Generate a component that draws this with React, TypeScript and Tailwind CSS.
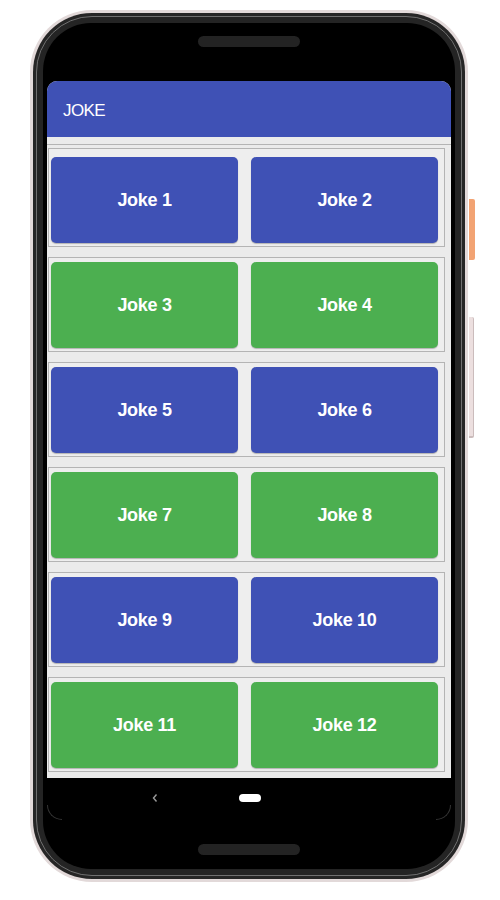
const jokes = Array.from({ length: 12 }, (_, i) => `Joke ${i + 1}`)

function JokeButton({ label, color }: { label: string; color: string }) {
  return (
    <div
      className={`${color} h-[86px] rounded-[5px] shadow-[0_1px_1px_rgba(0,0,0,0.25)] flex items-center justify-center text-white text-[18px] font-bold tracking-[-0.3px]`}
    >
      {label}
    </div>
  )
}

function JokeRow({ left, right, index }: { left: string; right: string; index: number }) {
  const color = index % 2 === 0 ? 'bg-[#3f51b5]' : 'bg-[#4caf50]'
  return (
    <div
      className={`ml-[1px] mr-[6px] border border-[#b4b4b4] bg-[#eeeeee] pl-[2px] pr-[6px] pb-[3px] grid grid-cols-2 gap-[13px] ${
        index === 0 ? 'mt-[3px] pt-[8px]' : 'mt-[10px] pt-[4px]'
      }`}
    >
      <JokeButton label={left} color={color} />
      <JokeButton label={right} color={color} />
    </div>
  )
}

export default function App() {
  const rows: [string, string][] = []
  for (let i = 0; i < jokes.length; i += 2) rows.push([jokes[i], jokes[i + 1]])

  return (
    <div className="w-[500px] h-[900px] bg-white flex items-start overflow-hidden font-['Liberation_Sans',Arial,sans-serif]">
      {/* phone body */}
      <div className="ml-[30px] mt-[10px] w-[438px] h-[872px] rounded-[62px] bg-[#e2d9d9] p-[3px]">
        <div className="h-full rounded-[59px] bg-[#262626] p-[3px]">
          <div className="h-full rounded-[56px] border border-[#707070] bg-[#242424] p-[6px]">
            <div className="h-full rounded-[48px] bg-black flex flex-col">
              {/* top speaker */}
              <div className="h-[58px] pt-[13px] flex justify-center">
                <div className="w-[102px] h-[11px] rounded-full bg-[#232323]" />
              </div>

              {/* screen */}
              <div className="mx-[4px] h-[697px] rounded-t-[10px] overflow-hidden bg-[#ebebeb] flex flex-col">
                <div className="h-[56px] shrink-0 bg-[#3f51b5] flex items-center pl-[16px] pt-[3px] text-white text-[17px] tracking-[-0.6px]">
                  JOKE
                </div>
                <div className="pt-[7px]">
                  <div className="border-t border-[#b4b4b4]">
                    {rows.map(([l, r], i) => (
                      <JokeRow key={l} left={l} right={r} index={i} />
                    ))}
                  </div>
                </div>
              </div>

              {/* nav bar */}
              <div className="flex flex-col">
                <div className="pt-[14px] flex items-center pl-[109px]">
                  <svg width="6" height="10" viewBox="0 0 6 10" className="mt-[1px]">
                    <path d="M4.5 1.5 L1.5 5 L4.5 8.5" stroke="#9a9a9a" strokeWidth="1.4" fill="none" />
                  </svg>
                  <div className="ml-[81px] w-[22px] h-[8px] rounded-full bg-white" />
                </div>
                <div className="flex justify-between px-[4px] mt-[2px]">
                  <div className="w-[15px] h-[15px] border-l border-b border-[#333] rounded-bl-[15px]" />
                  <div className="w-[15px] h-[15px] border-r border-b border-[#333] rounded-br-[15px]" />
                </div>
                <div className="mt-[24px] flex justify-center">
                  <div className="w-[102px] h-[11px] rounded-full bg-[#232323]" />
                </div>
              </div>
            </div>
          </div>
        </div>
      </div>

      {/* side buttons */}
      <div className="ml-[1px] flex flex-col">
        <div className="mt-[199px] w-[6px] h-[61px] rounded-r-[2px] bg-[#f2a373]" />
        <div className="mt-[57px] w-[5px] h-[121px] rounded-r-[2px] bg-[#ecdfdf] border-r border-b-2 border-[#cbbcbc]" />
      </div>
    </div>
  )
}
